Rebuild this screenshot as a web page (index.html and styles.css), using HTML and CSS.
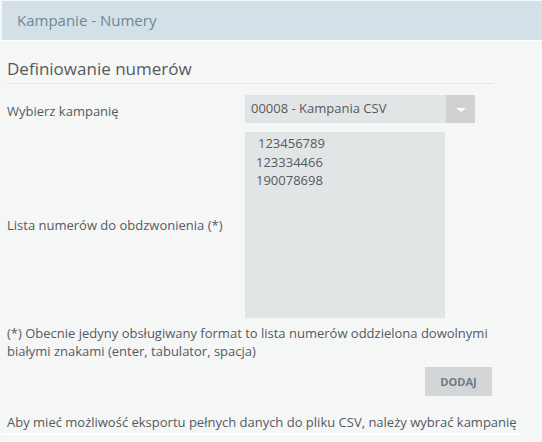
FILE: index.html
```html
<!DOCTYPE html>
<html lang="pl">
<head>
<meta charset="utf-8">
<title>Kampanie - Numery</title>
<link rel="stylesheet" href="styles.css">
</head>
<body>
<div class="header">Kampanie - Numery</div>
<div class="content">
  <h2 class="title">Definiowanie numerów</h2>
  <div class="row row-select">
    <label class="label">Wybierz kampanię</label>
    <div class="select">
      <span class="select-value">00008 - Kampania CSV</span>
      <span class="select-arrow"><span class="caret"></span></span>
    </div>
  </div>
  <div class="row row-textarea">
    <label class="label">Lista numerów do obdzwonienia (*)</label>
    <div class="textarea"><div class="num first">123456789</div><div class="num">123334466</div><div class="num">190078698</div></div>
  </div>
  <p class="note">(*) Obecnie jedyny obsługiwany format to lista numerów oddzielona dowolnymi białymi znakami (enter, tabulator, spacja)</p>
  <div class="actions"><button class="btn">DODAJ</button></div>
  <p class="export">Aby mieć możliwość eksportu pełnych danych do pliku CSV, należy wybrać kampanię</p>
</div>
</body>
</html>
```
FILE: styles.css
```css
html, body {
  margin: 0;
  padding: 0;
}
body {
  background: #f5f6f6;
  font-family: "Open Sans", "Liberation Sans", sans-serif;
  font-size: 13px;
  color: #555a5e;
  padding-top: 1px;
}
.header {
  margin-left: 2px;
  height: 39px;
  line-height: 39px;
  background: #d4e0e8;
  border-bottom: 1px solid #ffffff;
  padding-left: 15px;
  font-size: 15px;
  color: #6f8798;
}
.content {
  padding: 0 0 0 2px;
  width: 520px;
}
.title {
  margin: 16px 28px 0 5px;
  padding-bottom: 2px;
  font-size: 17px;
  font-weight: normal;
  line-height: 24px;
  color: #555a5e;
  border-bottom: 1px solid #e3e6e6;
}
.row {
  display: flex;
  align-items: center;
  margin-left: 5px;
}
.label {
  width: 238px;
  flex: none;
}
.row-select {
  margin-top: 11px;
}
.row-select .label {
  padding-top: 4px;
}
.select {
  display: flex;
  width: 230px;
  height: 28px;
  background: #e2e5e6;
}
.select-value {
  flex: 1;
  padding-left: 6px;
  line-height: 27px;
}
.select-arrow {
  width: 29px;
  background: #cfd1d2;
  display: flex;
  align-items: center;
  justify-content: center;
}
.caret {
  width: 0;
  height: 0;
  border-left: 5px solid transparent;
  border-right: 5px solid transparent;
  border-top: 4px solid #ffffff;
  margin-top: 1px;
}
.row-textarea {
  margin-top: 9px;
}
.textarea {
  width: 189px;
  height: 184px;
  padding: 2px 0 0 11px;
  background: #e2e5e6;
  line-height: 18.5px;
}
.num.first {
  padding-left: 2px;
}
.note {
  margin: 6px 0 0 5px;
  line-height: 18px;
  width: 520px;
}
.actions {
  display: flex;
  justify-content: flex-end;
  width: 490px;
  margin-top: 7px;
}
.btn {
  width: 67px;
  height: 29px;
  border: none;
  background: #d4d5d6;
  font-family: "Open Sans", "Liberation Sans", sans-serif;
  font-size: 11px;
  font-weight: bold;
  color: #6b7a88;
  padding: 0;
}
.export {
  margin: 17px 0 0 0;
  padding: 0 0 2px 5px;
  line-height: 18px;
  border-bottom: 2px solid #ffffff;
}
```
